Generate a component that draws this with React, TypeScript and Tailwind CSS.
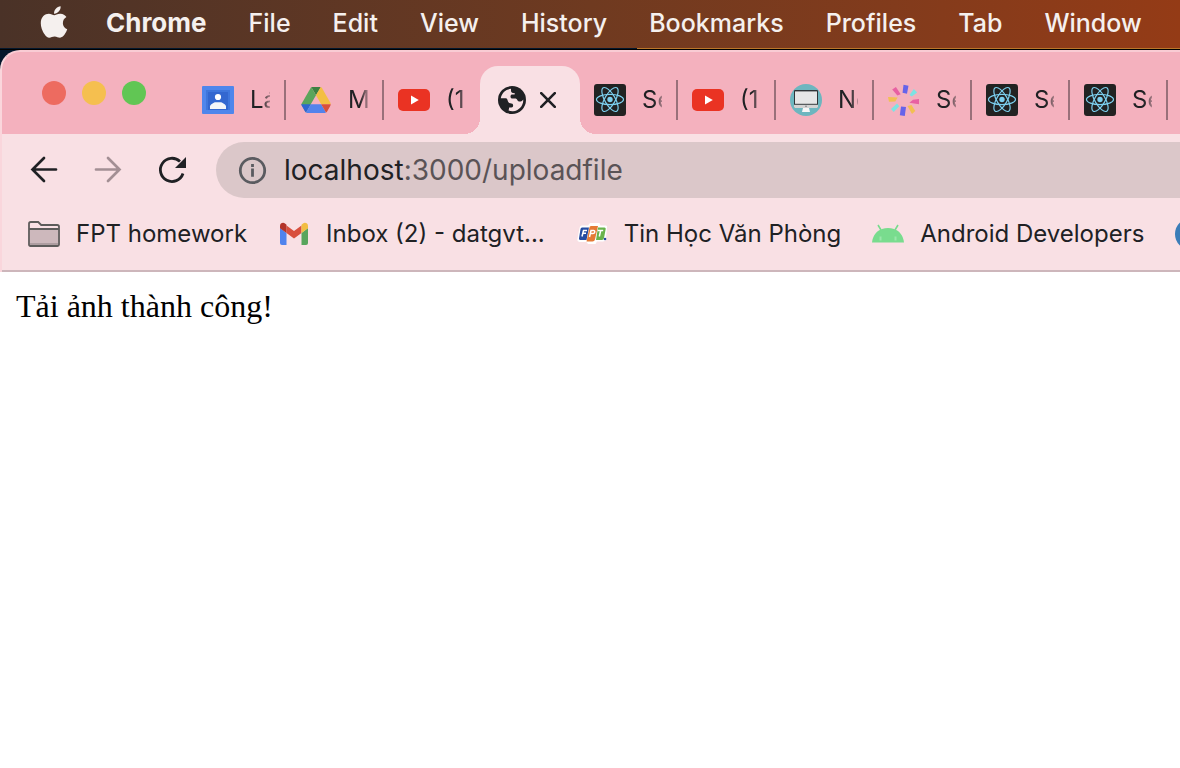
import type { ReactNode } from "react";
import { FaApple } from "react-icons/fa";

const menus = ["File", "Edit", "View", "History", "Bookmarks", "Profiles", "Tab", "Window"];

function ClassroomIcon() {
  return (
    <svg viewBox="0 0 32 32" className="size-8 shrink-0" aria-hidden="true">
      <rect y="2" width="32" height="28" rx="1" fill="#4f86ec" />
      <rect x="4" y="6" width="24" height="20" fill="#3f76dc" />
      <rect x="6" y="8" width="20" height="18" fill="#3367d0" />
      <circle cx="16" cy="13" r="3.1" fill="#fff" />
      <path d="M8 25v-2.500c0-2 3-3.500 5-4.300h6c2 .8 5 2.300 5 4.300V25z" fill="#f4f5f8" />
    </svg>
  );
}

function DriveIcon() {
  return (
    <svg viewBox="0 0 32 32" className="size-8 shrink-0" aria-hidden="true">
      <path d="M11.2 3h9.6L16 11.3z" fill="#3c8142" />
      <path d="M11.2 3 1.3 20.2 6 28.4 16 11.3z" fill="#5ba55b" />
      <path d="M20.8 3c.6.2 1 .7 1.3 1.2l8 14c.4.7.6 1.3.6 2h-9.5L16 11.3z" fill="#f3bf42" />
      <path d="M1.3 20.2h9.5L6 28.4c-.6-.2-1-.8-1.3-1.3l-2.8-5c-.4-.7-.6-1.2-.6-1.9z" fill="#2f66d0" />
      <path d="M10.8 20.2h10.4L26 28.4c-.7.4-1.4.6-2.2.6H8.2c-.8 0-1.5-.2-2.2-.6z" fill="#5383ec" />
      <path d="M21.2 20.2h9.5c0 .7-.2 1.3-.6 2l-2.8 5c-.3.6-.7 1-1.3 1.2z" fill="#d8513a" />
    </svg>
  );
}

function YoutubeIcon() {
  return (
    <svg viewBox="0 0 32 32" className="size-8 shrink-0" aria-hidden="true">
      <rect x="0" y="5" width="32" height="22" rx="5" fill="#ea3323" />
      <path d="M13 11.4v9.2l7.8-4.600z" fill="#fff" />
    </svg>
  );
}

function ReactIcon() {
  return (
    <svg viewBox="0 0 32 32" className="size-8 shrink-0" aria-hidden="true">
      <rect width="32" height="32" rx="3" fill="#222" />
      <g fill="none" stroke="#7ccfee" strokeWidth="1.2">
        <ellipse cx="16" cy="15.500" rx="13.500" ry="5.200" />
        <ellipse cx="16" cy="15.500" rx="13.500" ry="5.200" transform="rotate(60 16 15.500)" />
        <ellipse cx="16" cy="15.500" rx="13.500" ry="5.200" transform="rotate(120 16 15.500)" />
      </g>
      <circle cx="16" cy="15.500" r="2.700" fill="#7ccfee" />
    </svg>
  );
}

function MonitorIcon() {
  return (
    <svg viewBox="0 0 32 32" className="size-8 shrink-0" aria-hidden="true">
      <circle cx="16" cy="16" r="16" fill="#6db6bf" />
      <rect x="4" y="6" width="24" height="18" rx="1" fill="#2f3437" />
      <rect x="5" y="7.400" width="22" height="12.400" fill="#e6e6e6" />
      <path d="M4 20.800h24V23a1 1 0 0 1-1 1H5a1 1 0 0 1-1-1z" fill="#d3d3d3" />
      <circle cx="16" cy="22.300" r=".8" fill="#777" />
      <path d="M13 24h6l1 4h-8z" fill="#f7f7f7" />
    </svg>
  );
}

function BurstIcon() {
  return (
    <svg viewBox="0 0 32 32" className="size-8 shrink-0" aria-hidden="true">
      <path d="M15.500.8l5 .9-1.500 8-4.500-1z" fill="#6663ea" />
      <path d="M21.500 11l4.300-6 3.400 3.600-5.400 4z" fill="#7de3e3" />
      <path d="M31 15v5.200l-9.600-1.400 3.600-3z" fill="#e860a2" />
      <path d="M19.500 22l4-1 3.800 6-3.300 3z" fill="#f2bf52" />
      <path d="M13 22.500l5 .5-1.200 9-5-.8z" fill="#6663ea" />
      <path d="M3 25l6-5.500 2.300 2.800-5.600 5.700z" fill="#7de3e3" />
      <path d="M0 13l9.600.6-2.300 4L1 17.800z" fill="#f2bf52" />
      <path d="M4.200 5.500l3.700-2.600 4.800 7.300-3.300 1.200z" fill="#e860a2" />
    </svg>
  );
}

function GlobeIcon() {
  return (
    <svg viewBox="0 0 32 32" className="size-8 shrink-0" aria-hidden="true">
      <circle cx="16" cy="16" r="14" fill="#202124" />
      <path d="M4.800 14.200C5.600 9 9.700 5.200 15 4.800v1.600c-.2 1.400.7 2.400 2 2.600l1.400.2c.8.200.8 1-.2 1.200h-2.400c-1.600.4-1.800 3.400-.2 4h4c1.800.4 1.600 2.600 3.400 3h1.600c1.200 0 2.200-1 2.600-1.800.5 5.600-4.200 11.200-10.200 11.600-1.500.1-3.200-.2-4.400-.8l.6-2.800h2.200c2 0 2.200-2.800 1-3.800-1.200-.8-3-.4-4-1.600-.8-1-.6-3.200-2.200-4z" fill="#f9e0e4" />
    </svg>
  );
}

function FolderIcon() {
  return (
    <svg viewBox="0 0 32 32" className="size-8 shrink-0" aria-hidden="true">
      <path d="M1 26.500V5.800Q1 4 2.800 4h7.400l3 3h16Q31 7 31 8.800v17.700q0 1.500-1.500 1.500h-27Q1 28 1 26.500z" fill="#f9e0e4" />
      <path d="M2 12h28v13H2z" fill="#cdb8bc" />
      <path d="M2 25h28v2H2z" fill="#ad9da0" />
      <path d="M1 26.500V5.800Q1 4 2.800 4h7.400l3 3h16Q31 7 31 8.800v17.700q0 1.500-1.500 1.500h-27Q1 28 1 26.500zM1 11h30" fill="none" stroke="#5d5b5a" strokeWidth="1.800" />
    </svg>
  );
}

function GmailIcon() {
  return (
    <svg viewBox="0 0 32 32" className="size-8 shrink-0" aria-hidden="true">
      <path d="M2 10l6.500 5v12H4a2 2 0 0 1-2-2z" fill="#5083ed" />
      <path d="M23.500 15l6.500-5v15a2 2 0 0 1-2 2h-4.500z" fill="#58a55c" />
      <path d="M8.500 7.500l7.500 5.600 7.500-5.600V15L16 20.600 8.500 15z" fill="#d8503e" />
      <path d="M2 8c0-2.700 3-4 5-2.500l1.500 1.200V15L2 10.200z" fill="#b3342a" />
      <path d="M30 8c0-2.700-3-4-5-2.500l-1.500 1.200V15l6.500-4.800z" fill="#f2bd42" />
    </svg>
  );
}

function FptIcon() {
  return (
    <svg viewBox="0 0 32 32" className="size-8 shrink-0" aria-hidden="true">
      <path d="M5.500 7.500H12L14 5h9.500l1 2.500H30q1.500.5 1 2L30 20q.5 3-3 3.500h-6l-1.500 2.400H12L10.500 24H3.500Q.8 23.500 1.500 20.500L3.500 10q.3-2 2-2.500z" fill="#fff" />
      <path d="M6 9.500h7L10.500 22H4.200Q2.600 22 3 20.300L4.500 11q.3-1.500 1.500-1.500z" fill="#264da2" />
      <path d="M15 8h7l-3 13.500q-.5 2-2.500 2h-6L13.300 10q.3-2 1.700-2z" fill="#e57a35" />
      <path d="M22 9.500h6.500q1.500 0 1.200 1.500L28 20q-.4 2-2 2h-6z" fill="#69b34c" />
      <path d="M6 18.500l1.500-6H11M7 15.200h3M13.500 19l1.500-6.500h2.500q1.500 0 1.200 1.600t-2 1.500h-2M21.800 12.500h5.400M24.700 12.500l-1.400 6" fill="none" stroke="#fff" strokeWidth="1.500" />
      <circle cx="29" cy="21" r="1.300" fill="#264da2" />
    </svg>
  );
}

function AndroidIcon() {
  return (
    <svg viewBox="0 0 32 32" className="size-8 shrink-0" aria-hidden="true">
      <path d="M0 24.500C.6 17.500 5 12.300 10 10.900q6-1.600 12 0C27 12.300 31.400 17.500 32 24.500z" fill="#79dc8e" />
      <path d="M6 7l3 5M26 7l-3 5" stroke="#79dc8e" strokeWidth="1.600" />
      <path d="M8.500 18.500v4M23.500 18.500v4" stroke="#9be6aa" strokeWidth="2" />
    </svg>
  );
}

type TabInfo = { title: string; icon: ReactNode; divider: boolean };

const tabsBefore: TabInfo[] = [
  { title: "Lá", icon: <ClassroomIcon />, divider: false },
  { title: "M", icon: <DriveIcon />, divider: true },
  { title: "(1", icon: <YoutubeIcon />, divider: true },
];

const tabsAfter: TabInfo[] = [
  { title: "Se", icon: <ReactIcon />, divider: false },
  { title: "(1", icon: <YoutubeIcon />, divider: true },
  { title: "Ne", icon: <MonitorIcon />, divider: true },
  { title: "Se", icon: <BurstIcon />, divider: true },
  { title: "Se", icon: <ReactIcon />, divider: true },
  { title: "Se", icon: <ReactIcon />, divider: true },
];

function Tab({ title, icon, divider }: TabInfo) {
  return (
    <button
      type="button"
      className={`flex h-10 w-[98px] shrink-0 items-center gap-4 border-l-2 pl-[14px] ${divider ? "border-[#99707a]" : "border-transparent"}`}
    >
      {icon}
      <span className="w-5 overflow-hidden whitespace-nowrap text-left text-2xl text-[#202124] [mask-image:linear-gradient(to_right,black_60%,transparent_120%)]">
        {title}
      </span>
    </button>
  );
}

function Bookmark({ label, icon }: { label: string; icon: ReactNode }) {
  return (
    <a href="#" className="flex shrink-0 items-center gap-4 whitespace-nowrap">
      {icon}
      <span>{label}</span>
    </a>
  );
}

export default function App() {
  return (
    <div className="flex min-h-screen flex-col overflow-hidden bg-white font-['Inter','Liberation_Sans',sans-serif]">
      <nav
        aria-label="Menu bar"
        className="flex h-12 items-baseline gap-[42px] overflow-hidden bg-linear-to-r from-[#4a3227] via-[#6f3a20] to-[#943b16] pl-9 text-[25px] leading-[46px] font-medium text-[#f5f0ee] text-shadow-md"
      >
        <button type="button" aria-label="Apple menu" className="shrink-0 self-center">
          <FaApple className="-mt-1 size-9" />
        </button>
        <button type="button" className="-ml-2 text-[26px] font-bold">Chrome</button>
        {menus.map((menu) => (
          <button key={menu} type="button">{menu}</button>
        ))}
      </nav>

      <div className="bg-linear-to-r from-[#04172c] from-54% to-[#b9762a] to-54% pt-px">
        <div className="bg-[#04172c]">
          <div className="border-t border-black">
            <header className="overflow-hidden rounded-tl-[20px] border-t-2 border-l-2 border-t-[#f9ccd4] border-l-[#fad6dc] bg-[#f4b1be]">
              <div className="flex h-[82px] items-end">
                <div className="flex h-full shrink-0 gap-4 pt-[29px] pr-10 pl-10">
                  <button type="button" aria-label="Close window" className="size-6 rounded-full bg-[#ed6b60]" />
                  <button type="button" aria-label="Minimise window" className="size-6 rounded-full bg-[#f5bf4f]" />
                  <button type="button" aria-label="Zoom window" className="size-6 rounded-full bg-[#61c654]" />
                </div>
                <div className="flex h-[68px] min-w-0 flex-1 items-center">
                  {tabsBefore.map((tab, i) => (
                    <Tab key={i} {...tab} />
                  ))}
                  <div className="relative -mr-0.5 flex h-full w-[100px] shrink-0 items-center gap-3 rounded-t-[18px] bg-[#f9e0e4] pl-4">
                    <span className="absolute bottom-0 -left-4 size-4 bg-[radial-gradient(circle_at_0_0,transparent_16px,#f9e0e4_16px)]" />
                    <span className="absolute -right-4 bottom-0 size-4 bg-[radial-gradient(circle_at_100%_0,transparent_16px,#f9e0e4_16px)]" />
                    <GlobeIcon />
                    <button type="button" aria-label="Close tab">
                      <svg viewBox="0 0 16 16" className="size-4" aria-hidden="true">
                        <path d="M1.200 1.200l13.600 13.600M14.800 1.200L1.200 14.800" stroke="#202124" strokeWidth="2.600" strokeLinecap="round" />
                      </svg>
                    </button>
                  </div>
                  {tabsAfter.map((tab, i) => (
                    <Tab key={i} {...tab} />
                  ))}
                  <span className="h-10 w-0.5 shrink-0 bg-[#99707a]" />
                </div>
              </div>

              <div className="border-b-2 border-[#cdb6bb] bg-[#f9e0e4]">
                <div className="flex items-center pt-2">
                  <div className="flex shrink-0 gap-8 pr-7 pl-[26px]">
                    <button type="button" aria-label="Back">
                      <svg viewBox="0 0 32 32" className="size-8" aria-hidden="true">
                        <path d="M28 15.500H4.500M16 4L4.500 15.500 16 27" fill="none" stroke="#202124" strokeWidth="2.700" strokeLinecap="round" />
                      </svg>
                    </button>
                    <button type="button" aria-label="Forward">
                      <svg viewBox="0 0 32 32" className="size-8" aria-hidden="true">
                        <path d="M4 15.500h23.500M16 4l11.500 11.500L16 27" fill="none" stroke="#a38f94" strokeWidth="2.700" strokeLinecap="round" />
                      </svg>
                    </button>
                    <button type="button" aria-label="Reload">
                      <svg viewBox="0 0 32 32" className="size-8" aria-hidden="true">
                        <path d="M27 19.500A11.600 11.600 0 1 1 24 7.500" fill="none" stroke="#202124" strokeWidth="2.800" />
                        <path d="M30 3v11H19z" fill="#202124" />
                      </svg>
                    </button>
                  </div>
                  <div className="flex h-14 flex-1 items-center gap-4 rounded-l-full bg-[#dbc7c9] pl-5">
                    <svg viewBox="0 0 32 32" className="size-8 shrink-0" aria-hidden="true">
                      <circle cx="16.500" cy="16.500" r="12.200" fill="none" stroke="#5a5b60" strokeWidth="2.800" />
                      <path d="M16.500 14.500v8.300M16.500 10v3" stroke="#5a5b60" strokeWidth="2.800" />
                    </svg>
                    <span className="whitespace-nowrap text-[28px] text-[#5a5356]">
                      <span className="text-[#202124]">localhost</span>:3000/uploadfile
                    </span>
                  </div>
                </div>
                <nav aria-label="Bookmarks" className="flex h-[72px] items-center gap-[31px] overflow-hidden pl-[26px] text-2xl text-[#202124]">
                  <Bookmark label="FPT homework" icon={<FolderIcon />} />
                  <Bookmark label="Inbox (2) - datgvt..." icon={<GmailIcon />} />
                  <Bookmark label="Tin Học Văn Phòng" icon={<FptIcon />} />
                  <Bookmark label="Android Developers" icon={<AndroidIcon />} />
                  <span className="size-8 shrink-0 rounded-full bg-[#3b7db8]" />
                </nav>
              </div>
            </header>
          </div>
        </div>
      </div>

      <main className="flex-1 p-4 font-['Liberation_Serif',serif] text-[32px] leading-9 text-black">
        <p>Tải ảnh thành công!</p>
      </main>
    </div>
  );
}
